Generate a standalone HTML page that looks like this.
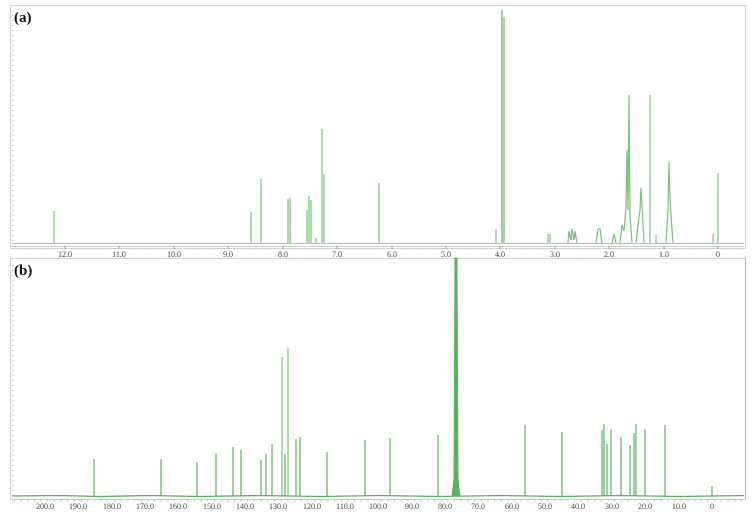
<!DOCTYPE html>
<html><head><meta charset="utf-8"><style>
html,body{margin:0;padding:0;background:#fff;width:753px;height:518px;overflow:hidden}
svg{display:block}
.t{font-family:"Liberation Serif",serif;font-size:8px;fill:#444;text-anchor:middle}
.lb{font-family:"Liberation Serif",serif;font-weight:bold;font-size:15px;fill:#111}
</style></head><body>
<svg width="753" height="518" viewBox="0 0 753 518" xmlns="http://www.w3.org/2000/svg">
<defs>
<pattern id="tk" x="0.5" y="0" width="5.44" height="4" patternUnits="userSpaceOnUse"><line x1="0.5" y1="0" x2="0.5" y2="2" stroke="#999" stroke-width="0.7"/></pattern>
<pattern id="tkb" x="0.5" y="0" width="6.67" height="4" patternUnits="userSpaceOnUse"><line x1="0.5" y1="0" x2="0.5" y2="2" stroke="#999" stroke-width="0.7"/></pattern>
<pattern id="tkl" x="0" y="0" width="4" height="5" patternUnits="userSpaceOnUse"><line x1="0" y1="0.5" x2="2" y2="0.5" stroke="#bbb" stroke-width="0.7"/></pattern>
</defs>
<!-- frames -->
<rect x="10.5" y="5.5" width="735" height="243" fill="none" stroke="#d4d4d4"/>
<line x1="10" y1="258.5" x2="746" y2="258.5" stroke="#d4d4d4"/>
<line x1="10.5" y1="258" x2="10.5" y2="500" stroke="#d4d4d4"/>
<line x1="745.5" y1="258" x2="745.5" y2="500" stroke="#bbb"/>
<line x1="10" y1="499.5" x2="746" y2="499.5" stroke="#ccc"/>
<rect x="11" y="8" width="3" height="236" fill="url(#tkl)"/>
<rect x="11" y="262" width="3" height="234" fill="url(#tkl)"/>
<line x1="12" y1="246.5" x2="744" y2="246.5" stroke="#bbb" stroke-width="0.7"/>
<rect x="12" y="246.5" width="732" height="2" fill="url(#tk)"/>
<rect x="12" y="499.5" width="732" height="2" fill="url(#tkb)"/>
<text class="lb" x="14" y="22">(a)</text>
<text class="lb" x="14" y="275">(b)</text>
<g stroke="#888" stroke-width="0.8">
<line x1="65" y1="246" x2="65" y2="249"/><line x1="119" y1="246" x2="119" y2="249"/><line x1="174" y1="246" x2="174" y2="249"/><line x1="228" y1="246" x2="228" y2="249"/><line x1="283" y1="246" x2="283" y2="249"/><line x1="337" y1="246" x2="337" y2="249"/><line x1="392" y1="246" x2="392" y2="249"/><line x1="446" y1="246" x2="446" y2="249"/><line x1="500" y1="246" x2="500" y2="249"/><line x1="555" y1="246" x2="555" y2="249"/><line x1="609" y1="246" x2="609" y2="249"/><line x1="664" y1="246" x2="664" y2="249"/><line x1="718" y1="246" x2="718" y2="249"/>
</g>
<!-- axis a labels -->
<g class="t">
<text x="65" y="257">12.0</text><text x="119" y="257">11.0</text><text x="174" y="257">10.0</text>
<text x="228" y="257">9.0</text><text x="283" y="257">8.0</text><text x="337" y="257">7.0</text>
<text x="392" y="257">6.0</text><text x="446" y="257">5.0</text><text x="500" y="257">4.0</text>
<text x="555" y="257">3.0</text><text x="609" y="257">2.0</text><text x="664" y="257">1.0</text>
<text x="718" y="257">0</text>
</g>
<g class="t">
<text x="45" y="509">200.0</text><text x="78" y="509">190.0</text><text x="112" y="509">180.0</text>
<text x="145" y="509">170.0</text><text x="178" y="509">160.0</text><text x="212" y="509">150.0</text>
<text x="245" y="509">140.0</text><text x="278" y="509">130.0</text><text x="312" y="509">120.0</text>
<text x="345" y="509">110.0</text><text x="378" y="509">100.0</text><text x="412" y="509">90.0</text>
<text x="445" y="509">80.0</text><text x="478" y="509">70.0</text><text x="512" y="509">60.0</text>
<text x="545" y="509">50.0</text><text x="578" y="509">40.0</text><text x="612" y="509">30.0</text>
<text x="645" y="509">20.0</text><text x="679" y="509">10.0</text><text x="712" y="509">0</text>
</g>
<!-- spectrum a -->
<g stroke="#79c279" stroke-width="1.2" fill="none">
<line x1="12" y1="243.5" x2="744" y2="243.5" stroke="#9fd49f" stroke-width="1"/>
<line x1="54" y1="243" x2="54" y2="211"/>
<line x1="251" y1="243" x2="251" y2="212"/>
<line x1="261" y1="243" x2="261" y2="179"/>
<line x1="288" y1="243" x2="288" y2="199"/><line x1="290" y1="243" x2="290" y2="198"/>
<line x1="307" y1="243" x2="307" y2="210"/><line x1="309" y1="243" x2="309" y2="196"/><line x1="311" y1="243" x2="311" y2="200"/>
<line x1="322" y1="243" x2="322" y2="129"/><line x1="324" y1="243" x2="324" y2="174"/>
<line x1="316" y1="243" x2="316" y2="238"/>
<line x1="379" y1="243" x2="379" y2="183"/>
<line x1="496" y1="243" x2="496" y2="229"/>
<line x1="502" y1="243" x2="502" y2="10" stroke-width="1.5"/><line x1="504" y1="243" x2="504" y2="17" stroke-width="1.3"/>
<line x1="548" y1="243" x2="548" y2="234"/><line x1="550" y1="243" x2="550" y2="234"/>
<path d="M568 243 L569 231 L571 240 L572 229 L574 240 L575 231 L577 243"/>
<path d="M596 243 L598 229 L600 229 L602 243"/>
<path d="M612 243 L614 234 L616 243"/>
<path d="M620 243 L622 225 L624 231 L626 208 L627 150 L628 210 L629 95 L630 215 L632 243"/>
<path d="M636 243 L638 225 L640 210 L641 188 L642 205 L644 243"/>
<line x1="650" y1="243" x2="650" y2="95"/>
<line x1="656" y1="243" x2="656" y2="235"/>
<path d="M666 243 L668 210 L669 162 L670 200 L671 215 L673 243"/>
<line x1="713" y1="243" x2="713" y2="234"/>
<line x1="718" y1="243" x2="718" y2="173"/>
</g>
<!-- spectrum b -->
<g stroke="#5cb15c" stroke-width="1.2" fill="none">
<path d="M12 496 L60 495.5 L100 496.5 L150 495.5 L200 496.5 L260 495.5 L320 496.5 L380 495.5 L440 496.5 L500 495.5 L560 496.5 L620 495.5 L680 496.5 L744 495.5" stroke-width="1.3"/>
<line x1="94" y1="496" x2="94" y2="459"/>
<line x1="161" y1="496" x2="161" y2="459"/>
<line x1="197" y1="496" x2="197" y2="462"/>
<line x1="216" y1="496" x2="216" y2="453"/>
<line x1="233" y1="496" x2="233" y2="447"/>
<line x1="241" y1="496" x2="241" y2="450"/>
<line x1="261" y1="496" x2="261" y2="460"/>
<line x1="266" y1="496" x2="266" y2="454"/>
<line x1="272" y1="496" x2="272" y2="444"/>
<line x1="282" y1="496" x2="282" y2="357" stroke="#7cc57c"/>
<line x1="285" y1="496" x2="285" y2="454"/>
<line x1="288" y1="496" x2="288" y2="348" stroke="#7cc57c"/>
<line x1="296" y1="496" x2="296" y2="439"/>
<line x1="300" y1="496" x2="300" y2="437"/>
<line x1="327" y1="496" x2="327" y2="452"/>
<line x1="365" y1="496" x2="365" y2="440"/>
<line x1="390" y1="496" x2="390" y2="438"/>
<line x1="438" y1="496" x2="438" y2="435"/>
<path d="M452 496 L454 480 L455 258 L457 258 L458 480 L460 496" fill="#5cb15c" stroke-width="1"/>
<line x1="525" y1="496" x2="525" y2="425"/>
<line x1="562" y1="496" x2="562" y2="432"/>
<line x1="602" y1="496" x2="602" y2="430"/>
<line x1="604" y1="496" x2="604" y2="424"/>
<line x1="607" y1="496" x2="607" y2="444"/>
<line x1="611" y1="496" x2="611" y2="429"/>
<line x1="621" y1="496" x2="621" y2="437"/>
<line x1="630" y1="496" x2="630" y2="445"/>
<line x1="634" y1="496" x2="634" y2="433"/>
<line x1="636" y1="496" x2="636" y2="424"/>
<line x1="645" y1="496" x2="645" y2="429"/>
<line x1="665" y1="496" x2="665" y2="425"/>
<line x1="712" y1="496" x2="712" y2="486"/>
</g>
</svg>
</body></html>
